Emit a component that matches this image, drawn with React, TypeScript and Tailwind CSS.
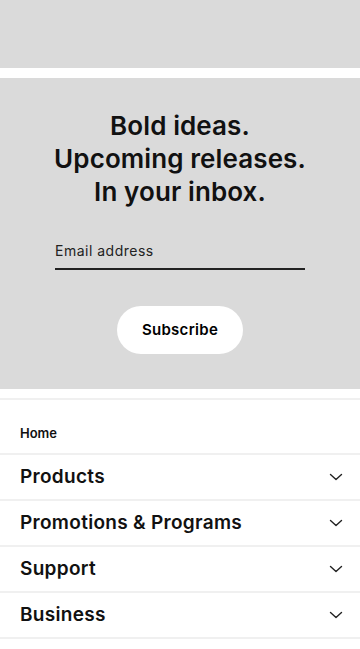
const navItems = [
  "Products",
  "Promotions & Programs",
  "Support",
  "Business",
];

function Chevron() {
  return (
    <svg width="14" height="8" viewBox="0 0 14 8" fill="none">
      <path
        d="M1.5 1.5l5.5 5 5.5-5"
        stroke="#222"
        strokeWidth="1.4"
        strokeLinecap="round"
        strokeLinejoin="round"
      />
    </svg>
  );
}

export default function App() {
  return (
    <div
      className="w-[360px] bg-white text-[#111]"
      style={{ fontFamily: "Inter, 'Liberation Sans', sans-serif" }}
    >

      <div className="h-[68px] bg-[#dadada]" />

      <div className="mt-[10px] bg-[#dadada] pt-[31px] pb-[35px] flex flex-col items-center">

        <h2 className="text-[26px] leading-[33px] font-semibold text-center tracking-[0.1px]">
          Bold ideas.
          <br />
          Upcoming releases.
          <br />
          In your inbox.
        </h2>

        <div className="mt-[34px] w-[250px] border-b-2 border-[#222] pb-[8px]">
          <p className="text-[14px] leading-[18px] text-[#222] tracking-[0.5px]">
            Email address
          </p>
        </div>

        <button className="mt-[36px] w-[126px] h-[48px] rounded-full bg-white text-[15px] font-semibold text-black tracking-[0.3px]">
          Subscribe
        </button>

      </div>

      <div className="mt-[9px] border-t-2 border-[#f0f0f0]">

        <div className="h-[55px] flex items-end px-5 pb-[10px] border-b-2 border-[#f0f0f0]">
          <span className="text-[13px] font-semibold">
            Home
          </span>
        </div>

        {navItems.map((item) => (
          <div
            key={item}
            className="h-[46px] flex items-center justify-between pl-5 pr-[17px] border-b-2 border-[#f0f0f0]"
          >
            <span className="text-[19px] font-semibold tracking-[0.3px]">
              {item}
            </span>
            <Chevron />
          </div>
        ))}

      </div>

    </div>
  );
}
